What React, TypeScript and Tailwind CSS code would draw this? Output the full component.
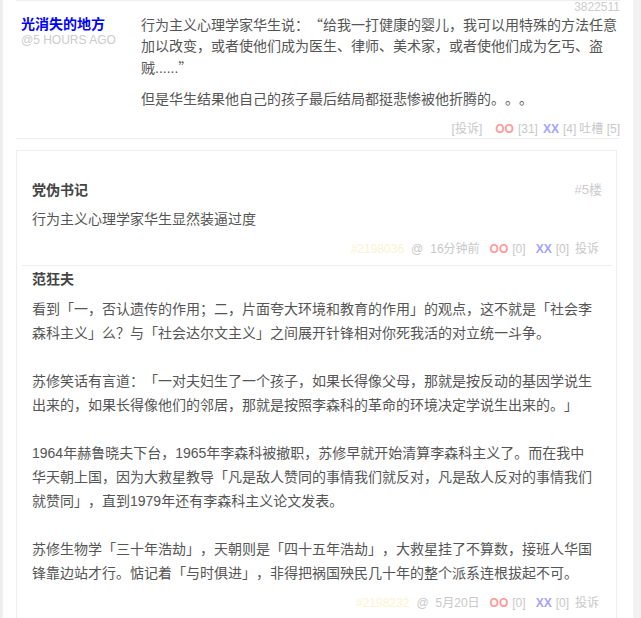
import React from "react";

const Q = ({ children }: { children: React.ReactNode }) => (
  <span className="font-['Noto_Sans_CJK_SC',sans-serif]">{children}</span>
);

function SubFooter({ id, time }: { id: string; time: string }) {
  return (
    <div className="mt-[9px] flex justify-end pr-[13px] text-[12px] leading-[18px] text-[#c8c8c8]">
      <span className="text-[#fbf3cf]">{id}</span>
      <span className="ml-[7px]">@</span>
      <span className="ml-[7px]">{time}</span>
      <span className="ml-[10px] font-bold text-[#ff9999]">OO</span>
      <span className="ml-[4px]">[0]</span>
      <span className="ml-[10px] font-bold text-[#a3a3ff]">XX</span>
      <span className="ml-[4px]">[0]</span>
      <span className="ml-[6px]">投诉</span>
    </div>
  );
}

export default function App() {
  return (
    <div className="flex h-[618px] w-full overflow-hidden bg-[#f2f2f2] font-['Liberation_Sans','Noto_Sans_CJK_SC',sans-serif] [text-spacing-trim:space-all]">
      <div className="w-[3px] shrink-0 bg-[#eeeeee]" />
      <div className="w-[630px] shrink-0 bg-white px-[13px]">
        {/* top comment */}
        <div className="border-y border-[#eeeeee]">
          <div className="text-right text-[12px] leading-[13px] text-[#cccccc]">3822511</div>
          <div className="flex">
            <div className="w-[125px] shrink-0 pl-[5px]">
              <div className="text-[14px] font-bold leading-[20px] text-[#0000ff]">光消失的地方</div>
              <div className="text-[12px] leading-[12px] text-[#cccccc]">@5 HOURS AGO</div>
            </div>
            <div className="flex-1 text-[14px] leading-[21px] text-[#555555]">
              <p className="mb-[10px]">
                行为主义心理学家华生说：<Q>“</Q>给我一打健康的婴儿，我可以用特殊的方法任意加以改变，或者使他们成为医生、律师、美术家，或者使他们成为乞丐、盗贼......<Q>”</Q>
              </p>
              <p>但是华生结果他自己的孩子最后结局都挺悲惨被他折腾的。。。</p>
              <div className="mt-[10px] flex justify-end text-[12px] leading-[18px] text-[#c8c8c8]">
                <span>[投诉]</span>
                <span className="ml-[13px] font-bold text-[#ff9999]">OO</span>
                <span className="ml-[4px]">[31]</span>
                <span className="ml-[5px] font-bold text-[#a3a3ff]">XX</span>
                <span className="ml-[4px]">[4]</span>
                <span className="ml-[3px]">吐槽 [5]</span>
              </div>
            </div>
          </div>
        </div>

        {/* tucao card */}
        <div className="mr-[3px] mt-[11px] border border-[#eeeeee] pt-[29px]">
          <div className="ml-[5px] mr-[4px] border-b border-[#eeeeee] pb-[7px] pl-[10px]">
            <div className="flex justify-between pr-[10px] leading-[20px]">
              <span className="text-[14px] font-bold text-[#444444]">党伪书记</span>
              <span className="text-[13px] text-[#cccccc]">#5楼</span>
            </div>
            <div className="mt-[7px] text-[14px] leading-[24px] text-[#555555]">行为主义心理学家华生显然装逼过度</div>
            <SubFooter id="#2198036" time="16分钟前" />
          </div>

          <div className="ml-[5px] mr-[4px] border-b border-[#eeeeee] pb-[7px] pl-[10px] pt-[3px]">
            <div className="text-[14px] font-bold leading-[20px] text-[#444444]">范狂夫</div>
            <div className="mt-[8px] space-y-[24px] pr-[16px] text-[14px] leading-[24px] text-[#555555]">
              <p>看到「一，否认遗传的作用；二，片面夸大环境和教育的作用」的观点，这不就是「社会李森科主义」么？与「社会达尔文主义」之间展开针锋相对你死我活的对立统一斗争。</p>
              <p>苏修笑话有言道：「一对夫妇生了一个孩子，如果长得像父母，那就是按反动的基因学说生出来的，如果长得像他们的邻居，那就是按照李森科的革命的环境决定学说生出来的。」</p>
              <p>1964年赫鲁晓夫下台，1965年李森科被撤职，苏修早就开始清算李森科主义了。而在我中华天朝上国，因为大救星教导「凡是敌人赞同的事情我们就反对，凡是敌人反对的事情我们就赞同」，直到1979年还有李森科主义论文发表。</p>
              <p>苏修生物学「三十年浩劫」，天朝则是「四十五年浩劫」，大救星挂了不算数，接班人华国锋靠边站才行。惦记着「与时俱进」，非得把祸国殃民几十年的整个派系连根拔起不可。</p>
            </div>
            <SubFooter id="#2198232" time="5月20日" />
          </div>
        </div>
      </div>
      <div className="flex-1" />
    </div>
  );
}
